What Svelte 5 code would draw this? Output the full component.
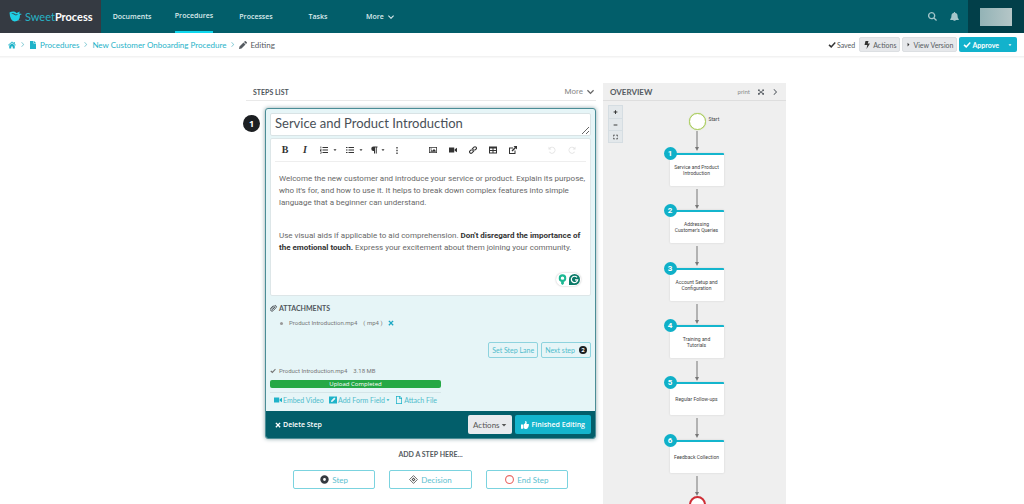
<script>
	let title = $state("Service and Product Introduction");
	let active = $state("Procedures");

	const menu = ["Documents", "Procedures", "Processes", "Tasks", "More"];

	const steps = [
		{ lines: ["Service and Product", "Introduction"], top: 52 },
		{ lines: ["Addressing", "Customer's Queries"], top: 109 },
		{ lines: ["Account Setup and", "Configuration"], top: 167 },
		{ lines: ["Training and", "Tutorials"], top: 224 },
		{ lines: ["Regular Follow-ups"], top: 281 },
		{ lines: ["Feedback Collection"], top: 339 }
	];

	// all on a 16x16 grid
	const icons = {
		home: "M8 1 0 8l1 1.2L8 3l7 6.2L16 8l-2.5-2.2V2h-2v2zM8 4.4 2.5 9.2V15h4v-4h3v4h4V9.2z",
		file: "M2 0h7v5h5v11H2zM10 0l4 4h-4z",
		fileLine: "M2 0h8l4 4v12H2zM3.5 1.5v13h9V6H8.500V1.500zM10 2v2.500h2.500z",
		pencil: "M0 16l1-5 8-8 4 4-8 8zM10 2l1.500-1.500q1-1 2 0l2 2q1 1 0 2L14 6z",
		check: "M1 9l2-2.500 3.500 3L13.500 2l2 2L6.500 14z",
		bolt: "M5 0h6L9.500 5H14L7 16l1.500-8H3z",
		right: "M5 2l6 6-6 6z",
		caret: "M2 5h12l-6 7z",
		chevron: "M0 5l2-2 6 6 6-6 2 2-8 8z",
		chevronRight: "M4 1.500L5.500 0l8 8-8 8L4 14.500 10.500 8z",
		search: "M6.500 0a6.500 6.500 0 0 1 5.300 10.200L16 14.400 14.400 16l-4.200-4.200A6.500 6.500 0 1 1 6.500 0zm0 2.300a4.200 4.200 0 1 0 0 8.400 4.200 4.200 0 0 0 0-8.400z",
		bell: "M7 0h2v1.500c3 .5 4.500 2.700 4.500 5.500 0 3 .8 4.300 2 5.500V14H.5v-1.500C1.700 11.300 2.500 10 2.500 7 2.500 4.200 4 2 7 1.500zM6 14.500h4a2 2 0 0 1-4 0z",
		ol: "M5 2h11v2H5zM5 7h11v2H5zM5 12h11v2H5zM1 1h1.500v4H1zM0 6.500h3V8L1.500 9H3v1H0V8.700l1.500-1.200H0zM0 11h3v4H0v-1h2v-.5H1v-1h1V12H0z",
		ul: "M5 2h11v2H5zM5 7h11v2H5zM5 12h11v2H5zM0 2h3v2H0zM0 7h3v2H0zM0 12h3v2H0z",
		para: "M7 1h8v2h-1.500v12h-2V3H10v12H8v-5H7A4.500 4.500 0 0 1 7 1z",
		dots: "M6.500 0h3v3.500h-3zM6.500 6.200h3v3.500h-3zM6.500 12.500h3V16h-3z",
		image: "M0 2h16v12H0zM1.500 3.500v9h13v-9zM3 11.500V10l2-2 1.500 1.500L10 6l3.500 3.500v2zM3 5h2.500v2H3z",
		video: "M0 3h10.500v10H0zM11.500 6.500L16 3.500v9l-4.500-3z",
		table: "M0 1h16v14H0zM2 5v3h5V5zm7 0v3h5V5zM2 10v3h5v-3zm7 0v3h5v-3z",
		external: "M0 3h8v2H2v9h9V9h2v7H0zM9 0h7v7l-2.500-2.500L7 11 5 9l6.500-6.500z",
		cross: "M1 3.500L3.500 1 8 5.500 12.500 1 15 3.500 10.500 8l4.500 4.500-2.500 2.500L8 10.500 3.500 15 1 12.500 5.500 8z",
		edit: "M0 1h16v14H0zM4 12l3-.5L13 5.500 10.500 3 4.500 9z",
		thumb: "M0 7h4v8.500H0zM5 7.500L8.500 4V0c3 0 3.500 2.500 2.500 6h3.500c2 0 1.800 2.500.8 3 .5 1 .2 2-.8 2.500.3 1-.1 1.800-1 2.200C13.500 15 12.500 16 10.500 16 8 16 7 15 5 14.500z",
		plus: "M6.500 2h3v4.500H14v3H9.500V14h-3V9.500H2v-3h4.500z",
		minus: "M2 6.500h12v3H2z",
		fit: "M1 1h5v2H3v3H1zM10 1h5v5h-2V3h-3zM1 10h2v3h3v2H1zM13 10h2v5h-5v-2h3z",
		expand: "M0 1h5L4 3l4 4 4-4-1-2h5v5l-2-1.500L10 8l4 3.500 2-1.500v5h-5l1-2-4-4-4 4 1 2H0v-5l2 1.500L6 8 2 4.500 0 6z",
		undo: "M1 1l2 2.500A7 7 0 1 1 2 12l1.800-1A5 5 0 1 0 4.500 5L7 7H1z",
		redo: "M15 1l-2 2.500A7 7 0 1 0 14 12l-1.800-1A5 5 0 1 1 11.500 5L9 7h6z"
	};
</script>

{#snippet icon(name)}
	<svg class="icon {name}" viewBox="0 0 16 16" aria-hidden="true"><path fill-rule="evenodd" d={icons[name]} /></svg>
{/snippet}

{#snippet chain()}
	<svg class="icon chain" viewBox="0 0 16 16" aria-hidden="true">
		<path d="M7 9.500a3 3 0 0 1 0-4.200l3-3a2.800 2.800 0 0 1 4 4L12 8.200M9 6.500a3 3 0 0 1 0 4.200l-3 3a2.800 2.800 0 0 1-4-4L4 7.800" fill="none" stroke="currentColor" stroke-width="2.200" />
	</svg>
{/snippet}

{#snippet clip()}
	<svg class="icon clip" viewBox="0 0 16 16" aria-hidden="true">
		<path d="M12 5l-6 6.200a1.200 1.200 0 0 1-1.800-1.700L10 3.300a2.600 2.600 0 0 1 4 3.600l-6.500 7A3.900 3.900 0 0 1 1.700 8.500L7.500 2.500" fill="none" stroke="currentColor" stroke-width="2.200" />
	</svg>
{/snippet}

<div class="page">
	<header class="topbar">
		<a class="logo" href="#home">
			<svg viewBox="0 0 28 22" aria-hidden="true">
				<path d="M1 3Q10-1 15 4l7-3-2 4 6 1-4 2q0 13-11 13Q2 20 1 3z" fill="#1fd0e6" />
				<path d="M4 5q6-2 9 2l6-1-5 3Q9 6 4 5z" fill="#37404a" />
				<path d="M17 19h9l-9 1z" fill="#8f979d" />
			</svg>
			<span class="sweet">Sweet</span><span class="process">Process</span>
		</a>
		<nav>
			{#each menu as item}
				<a href="#{item.toLowerCase()}" onclick={() => { active = item; }}>
					<span class:active={active == item}>{item}{#if item == "More"}{@render icon("chevron")}{/if}</span>
				</a>
			{/each}
		</nav>
		<div class="tools">
			<button aria-label="Search">{@render icon("search")}</button>
			<button aria-label="Notifications">{@render icon("bell")}</button>
		</div>
		<button class="account" aria-label="Account">
			<span class="avatar"></span>
		</button>
	</header>

	<div class="subbar">
		<div class="crumbs">
			<a href="#home" aria-label="Home">{@render icon("home")}</a>
			<i>{@render icon("chevronRight")}</i>
			<a href="#procedures">{@render icon("file")}Procedures</a>
			<i>{@render icon("chevronRight")}</i>
			<a href="#procedure">New Customer Onboarding Procedure</a>
			<i>{@render icon("chevronRight")}</i>
			<span class="current">{@render icon("pencil")}Editing</span>
		</div>
		<div class="doc-actions">
			<span class="saved">{@render icon("check")}Saved</span>
			<button class="grey">{@render icon("bolt")}Actions</button>
			<button class="grey">{@render icon("right")}View Version</button>
			<div class="approve">
				<button>{@render icon("check")}Approve</button>
				<button class="drop" aria-label="More approve options">{@render icon("caret")}</button>
			</div>
		</div>
	</div>

	<main>
		<section class="steps">
			<div class="section-head">
				<h2>STEPS LIST</h2>
				<button>More {@render icon("chevron")}</button>
			</div>

			<div class="step">
				<span class="number">1</span>
				<div class="card">
					<div class="card-body">
						<textarea class="title" rows="1" aria-label="Step title" bind:value={title}></textarea>

						<div class="editor">
							<div class="toolbar">
								<button class="b" aria-label="Bold">B</button>
								<button class="i" aria-label="Italic">I</button>
								<button class="wide" aria-label="Ordered list">{@render icon("ol")}{@render icon("caret")}</button>
								<button class="wide" aria-label="Unordered list">{@render icon("ul")}{@render icon("caret")}</button>
								<button aria-label="Paragraph format">{@render icon("para")}{@render icon("caret")}</button>
								<button aria-label="More text">{@render icon("dots")}</button>
								<div class="group">
									<button aria-label="Insert image">{@render icon("image")}</button>
									<button aria-label="Insert video">{@render icon("video")}</button>
									<button aria-label="Insert link">{@render chain()}</button>
									<button aria-label="Insert table">{@render icon("table")}</button>
									<button aria-label="Open in new window">{@render icon("external")}</button>
								</div>
								<div class="history">
									<button aria-label="Undo" disabled>{@render icon("undo")}</button>
									<button aria-label="Redo" disabled>{@render icon("redo")}</button>
								</div>
							</div>
							<div class="text" contenteditable="true" role="textbox" tabindex="0" aria-label="Step text" spellcheck="false">
								<p>Welcome the new customer and introduce your service or product. Explain its purpose, who it's for, and how to use it. It helps to break down complex features into simple language that a beginner can understand.</p>
								<p>Use visual aids if applicable to aid comprehension. <b>Don't disregard the importance of the emotional touch.</b> Express your excitement about them joining your community.</p>
							</div>
							<div class="assist">
								<svg viewBox="0 0 12 12" aria-hidden="true">
									<circle cx="6" cy="4.500" r="3" fill="none" stroke="#1cb893" stroke-width="2.200" />
									<path d="M4.500 8h3v2.500L6 12l-1.500-1.500z" fill="#1cb893" />
								</svg>
								<svg viewBox="0 0 12 12" aria-hidden="true">
									<path d="M6 0a6 6 0 1 1 0 12H0V6a6 6 0 0 1 6-6z" fill="#0b7a68" />
									<path d="M8.800 3.800A3.500 3.500 0 1 0 9.500 6.500H6.500" fill="none" stroke="#fff" stroke-width="1.300" />
								</svg>
							</div>
						</div>

						<h3>{@render clip()}ATTACHMENTS</h3>
						<ul class="files">
							<li>Product Introduction.mp4 <span>( mp4 )</span> <button aria-label="Remove file">{@render icon("cross")}</button></li>
						</ul>

						<div class="next">
							<button>Set Step Lane</button>
							<button>Next step <span class="badge">2</span></button>
						</div>

						<div class="upload">
							<p>{@render icon("check")}Product Introduction.mp4 <span>3.18 MB</span></p>
							<div class="progress">Upload Completed</div>
							<div class="links">
								<a href="#video">{@render icon("video")}Embed Video</a>
								<a href="#field">{@render icon("edit")}Add Form Field{@render icon("caret")}</a>
								<a href="#file">{@render icon("fileLine")}Attach File</a>
							</div>
						</div>
					</div>

					<div class="card-foot">
						<button class="delete">{@render icon("cross")}Delete Step</button>
						<button class="light">Actions{@render icon("caret")}</button>
						<button class="finish">{@render icon("thumb")}Finished Editing</button>
					</div>
				</div>
			</div>

			<div class="add">
				<h3>ADD A STEP HERE...</h3>
				<div class="choices">
					<button>
						<svg viewBox="0 0 16 16" aria-hidden="true"><circle cx="8" cy="8" r="5" fill="#fff" stroke="#343a40" stroke-width="5" /></svg>Step
					</button>
					<button>
						<svg viewBox="0 0 16 16" aria-hidden="true"><path d="M8 1l7 7-7 7-7-7z" fill="none" stroke="#555" stroke-width="1.500" /><path d="M8 4.500L11.500 8 8 11.500 4.500 8z" fill="#555" /><circle cx="8" cy="8" r="1" fill="#fff" /></svg>Decision
					</button>
					<button>
						<svg viewBox="0 0 16 16" aria-hidden="true"><circle cx="8" cy="8" r="7" fill="none" stroke="#ea6a66" stroke-width="2" /></svg>End Step
					</button>
				</div>
			</div>
		</section>

		<aside class="overview">
			<div class="overview-head">
				<h2>OVERVIEW</h2>
				<a href="#print">print</a>
				<button aria-label="Full screen">{@render icon("expand")}</button>
				<button aria-label="Hide overview">{@render icon("chevronRight")}</button>
			</div>
			<div class="canvas">
				<div class="zoom">
					<button aria-label="Zoom in">{@render icon("plus")}</button>
					<button aria-label="Zoom out">{@render icon("minus")}</button>
					<button aria-label="Fit">{@render icon("fit")}</button>
				</div>
				<span class="start"></span>
				<span class="start-label">Start</span>
				<svg class="arrow first" viewBox="0 0 6 20" aria-hidden="true"><path d="M2.500 0h1v16H5L3 20 1 16h1.500z" /></svg>
				{#each steps as step, i}
					<div class="node" style:top="{step.top}px">
						<span class="node-number">{i + 1}</span>
						<p>{#each step.lines as line}<span>{line}</span>{/each}</p>
						<svg class="arrow" viewBox="0 0 6 20" aria-hidden="true"><path d="M2.500 0h1v16H5L3 20 1 16h1.500z" /></svg>
					</div>
				{/each}
				<span class="end"></span>
			</div>
		</aside>
	</main>
</div>

<style>
	:global(body) {
		background: #fff;
	}
	.page {
		height: 100vh;
		overflow: hidden;
		display: flex;
		flex-direction: column;
		font-family: Lato, "Open Sans", sans-serif;
		font-size: 8px;
		line-height: 12px;
		color: #555b61;
	}
	.page * {
		box-sizing: border-box;
	}
	button {
		font: inherit;
		color: inherit;
		background: none;
		border: 0;
		padding: 0;
		display: flex;
		align-items: center;
		justify-content: center;
		cursor: pointer;
		white-space: nowrap;
	}
	a {
		color: #1fb3c9;
		text-decoration: none;
		white-space: nowrap;
	}
	h2, h3, p, ul {
		margin: 0;
		padding: 0;
	}
	.icon {
		width: 8px;
		height: 8px;
		fill: currentColor;
		flex: none;
	}
	.icon.caret {
		width: 4px;
		height: 4px;
	}

	.topbar {
		flex: none;
		display: flex;
		height: 33px;
		background: #025e6a;
	}
	.logo {
		display: flex;
		align-items: center;
		width: 101px;
		padding-left: 9px;
		background: #353a42;
		font-size: 11px;
	}
	.logo svg {
		width: 14px;
		height: 11px;
		margin-right: 2px;
	}
	.sweet {
		font-weight: 400;
		color: #27b4c6;
	}
	.process {
		font-weight: 700;
		color: #fff;
	}
	nav {
		display: grid;
		grid-template-columns: repeat(5, 62px);
		font-family: "Open Sans", sans-serif;
	}
	nav a {
		display: flex;
		justify-content: center;
		color: #dcebed;
		font-size: 7px;
		font-weight: 600;
	}
	nav span {
		display: flex;
		align-items: center;
	}
	nav span.active {
		border-bottom: 2px solid #0fd8ee;
	}
	nav .icon {
		width: 6px;
		height: 6px;
		margin-left: 4px;
	}
	.tools {
		display: flex;
		align-items: center;
		gap: 13px;
		margin-left: auto;
		padding-right: 9px;
		color: #a5c6ca;
	}
	.tools .icon {
		width: 9px;
		height: 9px;
	}
	.account {
		width: 56px;
		background: #023f49;
	}
	.avatar {
		width: 32px;
		height: 18px;
		background: linear-gradient(90deg, #93b3b6, #b5c6c7);
	}

	.subbar {
		flex: none;
		display: flex;
		justify-content: space-between;
		align-items: center;
		height: 24px;
		padding: 0 7px 0 8px;
		border-bottom: 1px solid #f2f2f2;
		box-shadow: 0 1px 1px #f8f8f8;
	}
	.crumbs, .doc-actions, .approve, .saved, .crumbs a, .current {
		display: flex;
		align-items: center;
	}
	.crumbs {
		gap: 4px;
	}
	.crumbs a, .current {
		gap: 3px;
	}
	.crumbs i {
		display: flex;
		color: #7fc8d3;
	}
	.crumbs i .icon {
		width: 5px;
		height: 5px;
	}
	.doc-actions {
		gap: 2px;
		font-size: 7px;
	}
	.doc-actions .icon {
		color: #333;
	}
	.doc-actions .right {
		width: 5px;
		height: 5px;
	}
	.saved {
		gap: 1px;
		margin-right: 2px;
	}
	.grey {
		gap: 2px;
		height: 15px;
		padding: 0 3px;
		background: #e6e8eb;
		border: 1px solid #dcdfe2;
		border-radius: 2px;
	}
	.approve {
		height: 15px;
		background: #12b2cc;
		border-radius: 2px;
		color: #fff;
		font-weight: 700;
	}
	.approve button {
		gap: 1px;
		padding: 0 4px;
	}
	.approve .drop {
		padding: 0 5px;
	}
	.approve .icon {
		color: #fff;
	}

	main {
		flex: 1;
		display: grid;
		grid-template-columns: minmax(0, 1fr) 183px;
		gap: 7px;
		padding: 26px 238px 0 246px;
	}
	h2, h3 {
		font-size: 7px;
		line-height: 12px;
		font-weight: 700;
	}
	.section-head {
		display: flex;
		justify-content: space-between;
		align-items: center;
		height: 18px;
		padding: 0 2px 0 7px;
		border-bottom: 1px solid #e9e9e9;
		color: #50565c;
	}
	.section-head button {
		gap: 4px;
		color: #888;
		font-family: Roboto, sans-serif;
	}
	.section-head .icon {
		width: 7px;
		color: #666;
	}
	.step {
		display: flex;
		margin: 7px 0 0 -3px;
		gap: 5px;
	}
	.number {
		flex: none;
		width: 17px;
		height: 17px;
		margin-top: 7px;
		border-radius: 50%;
		background: #1c1f22;
		color: #fff;
		font-family: "Open Sans", sans-serif;
		font-size: 9px;
		font-weight: 700;
		line-height: 17px;
		text-align: center;
	}
	.card {
		flex: 1;
		border: 1px solid #4b8d96;
		border-radius: 3px;
		background: #e6f5f7;
		box-shadow: 0 0 4px #8fa9ad;
		overflow: hidden;
	}
	.card-body {
		padding: 4px 4px 0;
	}
	.title {
		display: block;
		width: 100%;
		height: 23px;
		padding: 1px 4px;
		border: 1px solid #d9e3e5;
		border-radius: 2px;
		background: #fff;
		color: #495057;
		font-family: Lato, sans-serif;
		font-size: 13px;
		line-height: 17px;
		overflow: hidden;
		resize: vertical;
		outline: 0;
	}
	.editor {
		position: relative;
		height: 158px;
		margin-top: 2px;
		padding: 0 4px;
		border: 1px solid #dde6e8;
		border-radius: 2px;
		background: #fff;
	}
	.toolbar {
		display: flex;
		height: 23px;
		border-bottom: 1px solid #eee;
		color: #333;
	}
	.toolbar button {
		width: 20px;
		gap: 3px;
	}
	.toolbar .wide {
		width: 26px;
		gap: 5px;
	}
	.toolbar .b, .toolbar .i {
		font-family: "Liberation Serif", serif;
		font-size: 10px;
		font-weight: 700;
	}
	.toolbar .i {
		font-style: italic;
	}
	.toolbar .dots {
		height: 7px;
	}
	.group, .history {
		display: flex;
	}
	.group {
		margin-left: 16px;
	}
	.history {
		margin-left: auto;
		margin-right: 4px;
		color: #e4e4e4;
	}
	.text {
		padding: 11px 0 0 4px;
		font-family: Roboto, Arial, sans-serif;
		color: #686868;
		outline: 0;
	}
	.text p + p {
		margin-top: 21px;
	}
	.text b {
		color: #333;
	}
	.assist {
		position: absolute;
		right: 9px;
		bottom: 9px;
		display: flex;
		gap: 1px;
		padding: 1px;
		border-radius: 8px;
		box-shadow: 0 0 2px #bbb;
	}
	.assist svg {
		width: 11px;
		height: 11px;
	}
	.card h3 {
		display: flex;
		align-items: center;
		gap: 2px;
		margin-top: 6px;
		color: #50565c;
	}
	.clip {
		width: 7px;
	}
	.files, .upload {
		font-size: 7px;
		color: #777;
	}
	.files li, .upload p {
		font-family: Roboto, sans-serif;
		font-size: 6px;
	}
	.files {
		margin: 3px 0 0 10px;
		list-style: none;
	}
	.files li {
		display: flex;
		align-items: center;
		gap: 6px;
	}
	.files li::before {
		content: "";
		width: 3px;
		height: 3px;
		border-radius: 50%;
		background: #999;
	}
	.files .cross {
		width: 6px;
		color: #1fa9c4;
	}
	.next {
		display: flex;
		justify-content: flex-end;
		gap: 3px;
		margin-top: 13px;
	}
	.next button {
		height: 16px;
		padding: 0 3px;
		gap: 4px;
		border: 1px solid #8ed3de;
		border-radius: 2px;
		color: #4fbccc;
		font-size: 7px;
	}
	.badge {
		width: 8px;
		height: 8px;
		border-radius: 50%;
		background: #1c1f22;
		color: #fff;
		font-size: 6px;
		font-weight: 700;
		line-height: 8px;
	}
	.upload {
		width: 171px;
		margin-top: 7px;
	}
	.upload p {
		display: flex;
		align-items: center;
		gap: 3px;
	}
	.upload p span {
		margin-left: 3px;
	}
	.upload p .icon {
		width: 6px;
	}
	.progress {
		height: 8px;
		margin-top: 3px;
		border-radius: 2px;
		background: #25a845;
		color: #fff;
		font-family: "Open Sans", sans-serif;
		font-size: 6px;
		line-height: 8px;
		text-align: center;
	}
	.links {
		display: flex;
		justify-content: space-between;
		margin-top: 4px;
		padding: 1px 4px 5px;
		border-top: 1px solid #d5e5e8;
	}
	.links a {
		display: flex;
		align-items: center;
		gap: 1px;
		color: #4fbccc;
	}
	.links .icon {
		color: #1fb3c9;
	}
	.card-foot {
		display: flex;
		align-items: center;
		gap: 3px;
		height: 27px;
		padding: 0 4px;
		background: #025e6a;
		color: #fff;
	}
	.card-foot button {
		height: 19px;
		gap: 3px;
		border-radius: 2px;
	}
	.card-foot .delete {
		margin-right: auto;
		padding: 0 5px;
		gap: 2px;
		font-family: "Open Sans", sans-serif;
		font-size: 7px;
		font-weight: 600;
	}
	.delete .icon {
		width: 6px;
	}
	.card-foot .light {
		padding: 0 5px;
		background: #e8eaed;
		color: #555;
		gap: 1px;
	}
	.light .icon.caret {
		width: 6px;
		height: 6px;
	}
	.card-foot .finish {
		padding: 0 6px;
		background: #14b5cd;
		font-family: "Open Sans", sans-serif;
		font-size: 7px;
		font-weight: 600;
	}
	.add {
		padding: 9px 0 0 19px;
	}
	.add h3 {
		text-align: center;
	}
	.choices {
		display: grid;
		grid-template-columns: repeat(3, 1fr);
		gap: 14px;
		margin: 10px 28px 0;
	}
	.choices button {
		height: 19px;
		gap: 3px;
		border: 1px solid #7bd3df;
		border-radius: 2px;
		color: #5cc0cf;
	}
	.choices svg {
		width: 9px;
		height: 9px;
	}

	.overview {
		display: flex;
		flex-direction: column;
		background: #efefef;
	}
	.overview-head {
		display: flex;
		align-items: center;
		gap: 8px;
		height: 18px;
		padding: 0 8px 0 7px;
		border-bottom: 1px solid #dedede;
	}
	.overview-head h2 {
		margin-right: auto;
		font-size: 8px;
	}
	.overview-head a {
		color: #8a8a8a;
		font-size: 6px;
	}
	.overview-head .icon {
		width: 6px;
		height: 6px;
	}
	.canvas {
		position: relative;
		flex: 1;
		font-family: Roboto, sans-serif;
		font-size: 5px;
		line-height: 6px;
		color: #444;
	}
	.zoom {
		width: 15px;
		margin: 4px 0 0 5px;
		border: 1px solid #d5dde2;
		background: #e3e8eb;
	}
	.zoom button {
		width: 100%;
		height: 12px;
	}
	.zoom button + button {
		border-top: 1px solid #d5dde2;
	}
	.zoom .icon {
		width: 5px;
		color: #333;
	}
	.start, .end {
		position: absolute;
		left: calc(50% - 6px);
		width: 17px;
		height: 17px;
		border-radius: 50%;
		background: #fff;
	}
	.start {
		top: 12px;
		border: 1px solid #a9cc5c;
		box-shadow: 0 0 1px #a9cc5c;
	}
	.end {
		top: 395px;
		border: 2px solid #cf2e36;
	}
	.start-label {
		position: absolute;
		top: 15px;
		left: calc(50% + 14px);
	}
	.arrow {
		position: absolute;
		left: calc(50% - 3px);
		top: 34px;
		width: 6px;
		height: 20px;
		fill: #777;
	}
	.arrow.first {
		left: calc(50% - 1px);
		top: 30px;
	}
	.node {
		position: absolute;
		left: calc(50% - 25px);
		width: 54px;
		height: 33px;
		padding-bottom: 2px;
		border-top: 2px solid #14b5cd;
		border-radius: 1px;
		background: #fff;
		box-shadow: 0 0 2px #ccc;
		display: flex;
		align-items: center;
		justify-content: center;
		text-align: center;
	}
	.node p span {
		display: block;
		white-space: nowrap;
	}
	.node-number {
		position: absolute;
		left: -6px;
		top: -8px;
		width: 13px;
		height: 13px;
		border-radius: 50%;
		background: #0fb0c8;
		color: #fff;
		font-size: 8px;
		font-weight: 700;
		line-height: 13px;
	}
</style>
